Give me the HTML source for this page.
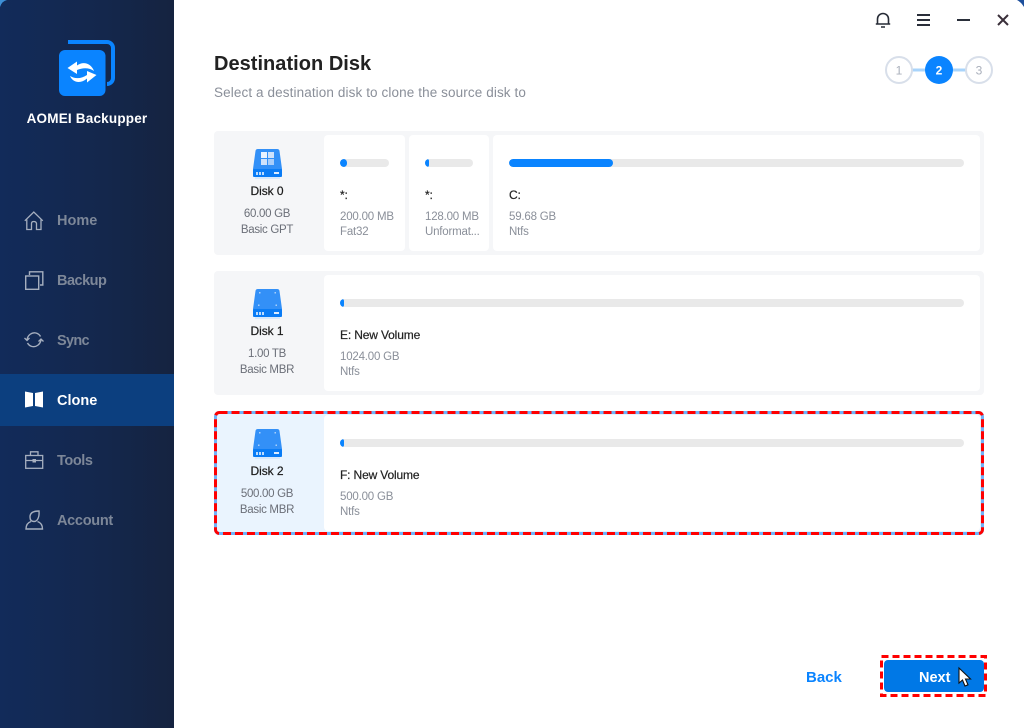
<!DOCTYPE html>
<html lang="en">
<head>
<meta charset="utf-8">
<title>AOMEI Backupper</title>
<style>
html,body{margin:0;padding:0;width:1024px;height:728px;overflow:hidden;background:#fff;font-family:"Liberation Sans",sans-serif}
#app{position:relative;width:1024px;height:728px;overflow:hidden;background:#fff}
.t{position:absolute;white-space:nowrap;line-height:16px}
.c{text-align:center}
.side{position:absolute;left:0;top:0;width:174px;height:728px;background:linear-gradient(90deg,#122b5a 0%,#14274c 60%,#152340 100%)}
.nav{position:absolute;left:57px;font-size:14.5px;font-weight:bold;color:#7d8798;line-height:18px}
.box{position:absolute;left:214px;width:770px;height:124px;background:#f5f6f8;border-radius:4px}
.w{position:absolute;background:#fff;border-radius:4px}
.bar{position:absolute;height:8px;background:#e9e9e9;border-radius:4px;overflow:hidden}
.bar i{position:absolute;left:0;top:0;height:8px;background:#0a84ff;border-radius:4px}
.dn{font-size:12px;color:#1b1b1b;-webkit-text-stroke:.2px #1b1b1b;letter-spacing:-.05px}
.ds{font-size:11.5px;color:#6b6f78;letter-spacing:-.3px}
.pn{font-size:12px;color:#222;-webkit-text-stroke:.2px #222;letter-spacing:-.15px}
.ps{font-size:11.5px;color:#8a8f99;letter-spacing:-.2px}
svg{position:absolute;overflow:visible}
</style>
</head>
<body>
<div id="app">
<div class="side"></div>

<!-- corners -->
<svg style="left:0;top:0" width="8" height="8"><path d="M0 0H7Q2 1 0 7Z" fill="#3d8fd6"/></svg>
<svg style="left:1014px;top:0" width="10" height="8"><path d="M3 0H10V7Q7 2 3 0Z" fill="#1c4f9c"/></svg>

<!-- logo -->
<svg style="left:59px;top:40px" width="57" height="57" viewBox="0 0 57 57">
<path d="M9 2H48a6 6 0 0 1 6 6V38a6 6 0 0 1-6 6" fill="none" stroke="#0a84ff" stroke-width="4"/>
<rect x="0" y="10" width="46.500" height="46" rx="6" fill="#0a84ff"/>
<path d="M8.500 28 18 21.500V25.500C24 21 32 23 35 31 30 27.500 24 27.500 18 30V34Z" fill="#fff"/>
<path d="M37.500 35 28 42.500V38.500C22 44 14 43 11 36 16 39 22 39 28 35V31Z" fill="#fff"/>
</svg>
<div class="t c" style="left:0;top:111px;width:174px;font-size:13.500px;font-weight:bold;color:#fff;letter-spacing:.2px">AOMEI Backupper</div>

<!-- nav -->
<div style="position:absolute;left:0;top:374px;width:174px;height:52px;background:#0c3f7f"></div>

<svg style="left:24px;top:211px" width="20" height="20" viewBox="0 0 20 20" fill="none" stroke="#a6afbf" stroke-width="1.300">
<path d="M.8 9.800 9.800 1l9 8.800"/><path d="M2.800 8.500V18.500H7.500V12.500Q7.500 10.500 9.800 10.500T12.500 12.500V18.500H17V8.500"/></svg>
<div class="nav" style="top:212px">Home</div>

<svg style="left:25px;top:271px" width="19" height="19" viewBox="0 0 19 19" fill="none" stroke="#a6afbf" stroke-width="1.400">
<rect x=".7" y="5" width="13" height="13.300"/><path d="M4.500 4V.8H17.800V14H15"/></svg>
<div class="nav" style="top:272px;letter-spacing:-.5px">Backup</div>

<svg style="left:24px;top:331px" width="20" height="18" viewBox="0 0 20 18" fill="none" stroke="#a6afbf" stroke-width="1.400">
<path d="M3 9C3.500 4 8 1 12 2c2 .5 3.500 1.700 4.500 3.500"/><path d="M17 8.500c-.5 5-5 8-9 7-2-.5-3.500-1.700-4.500-3.500"/>
<path d="M.5 7 3 9.500 5.500 7M14.500 10.500 17 8l2.500 2.500" stroke-width="1.300"/></svg>
<div class="nav" style="top:332px;letter-spacing:-.7px">Sync</div>

<svg style="left:25px;top:391px" width="18" height="17" viewBox="0 0 18 17" fill="#fff">
<path d="M0 .5 8 2V15L0 16.500Z"/><path d="M10 2 18 .5V16.500L10 15Z"/></svg>
<div class="nav" style="top:392px;color:#fff">Clone</div>

<svg style="left:25px;top:451px" width="19" height="18" viewBox="0 0 19 18" fill="none" stroke="#a6afbf" stroke-width="1.300">
<rect x=".7" y="4.500" width="17" height="12.800"/><path d="M5.500 4.500V.8H13V4.500M.7 9.500H7.500M11 9.500H17.700"/><rect x="7.500" y="8" width="3.500" height="3.500" fill="#a6afbf" stroke="none"/></svg>
<div class="nav" style="top:452px;letter-spacing:-.4px">Tools</div>

<svg style="left:25px;top:510px" width="19" height="20" viewBox="0 0 19 20" fill="none" stroke="#a6afbf" stroke-width="1.400">
<path d="M5 7C5 3 8 1 14 1 14.500 6 13 11.500 9 11.500 6.500 11.500 5 10 5 7Z"/><path d="M6 11.500C3 12.500 1 15 1 19H17.500C17.500 15 15.500 12.500 12.500 11.500"/></svg>
<div class="nav" style="top:512px;letter-spacing:-.3px">Account</div>

<!-- window controls -->
<svg style="left:875px;top:12px" width="16" height="16" viewBox="0 0 16 16" fill="none" stroke="#262b36" stroke-width="1.600">
<path d="M2.500 11.500V7a5.500 5.500 0 0 1 11 0v4.500M.8 12H15.200"/><path d="M6 15H10" stroke-width="1.500"/></svg>
<svg style="left:917px;top:14px" width="13" height="12" fill="#2a2f3a"><rect y="0" width="13" height="2"/><rect y="5" width="13" height="2"/><rect y="10" width="13" height="2"/></svg>
<svg style="left:957px;top:19px" width="13" height="2" fill="#2a2f3a"><rect width="13" height="2"/></svg>
<svg style="left:997px;top:14px" width="12" height="12" viewBox="0 0 12 12" stroke="#3a2f3a" stroke-width="2"><path d="M1 1 11 11M11 1 1 11"/></svg>

<!-- heading -->
<div class="t" style="left:214px;top:53px;font-size:20px;line-height:22px;font-weight:bold;color:#222;letter-spacing:.03px">Destination Disk</div>
<div class="t" style="left:214px;top:85px;font-size:13.500px;color:#8a8f99;letter-spacing:.11px">Select a destination disk to clone the source disk to</div>

<!-- steps -->
<svg style="left:885px;top:56px" width="110" height="28" viewBox="0 0 110 28">
<rect x="27" y="12.500" width="58" height="3" fill="#a9d4fb"/>
<circle cx="14" cy="14" r="13" fill="#fff" stroke="#d8dfea" stroke-width="2"/>
<circle cx="54" cy="14" r="14" fill="#0a84ff"/>
<circle cx="94" cy="14" r="13" fill="#fff" stroke="#d8dfea" stroke-width="2"/>
<text x="14" y="18.500" font-size="12" text-anchor="middle" fill="#a9afbb" font-family="Liberation Sans">1</text>
<text x="54" y="18.500" font-size="12" font-weight="bold" text-anchor="middle" fill="#fff" font-family="Liberation Sans">2</text>
<text x="94" y="18.500" font-size="12" text-anchor="middle" fill="#a9afbb" font-family="Liberation Sans">3</text>
</svg>

<!-- Disk 0 -->
<div class="box" style="top:131px"></div>
<div class="w" style="left:324px;top:135px;width:81px;height:116px"></div>
<div class="w" style="left:409px;top:135px;width:80px;height:116px"></div>
<div class="w" style="left:493px;top:135px;width:487px;height:116px"></div>
<svg style="left:253px;top:149px" width="29" height="30" viewBox="0 0 29 30">
<path d="M2.500 2Q2.700 0 5 0H24Q26.300 0 26.500 2L29 20V27H0V20Z" fill="#3390f7"/><rect x="0" y="20" width="29" height="8" rx="1" fill="#0a7cf5"/>
<rect x="2" y="28" width="25" height="2" fill="#d7e9fc"/>
<rect x="8" y="3" width="6" height="6" fill="#eaf3ff"/><rect x="15" y="3" width="6" height="6" fill="#cfe2fb"/><rect x="8" y="10" width="6" height="6" fill="#cfe2fb"/><rect x="15" y="10" width="6" height="6" fill="#a8cdfa"/>
<path d="M3 23h2v3H3zM6 23h2v3H6zM9 23h2v3H9z" fill="#bcdcff"/><rect x="21" y="23" width="5" height="2" fill="#dcecff"/></svg>
<div class="t c dn" style="left:214px;top:183px;width:106px">Disk 0</div>
<div class="t c ds" style="left:214px;top:206px;width:106px">60.00 GB</div>
<div class="t c ds" style="left:214px;top:222px;width:106px">Basic GPT</div>

<div class="bar" style="left:340px;top:159px;width:49px"><i style="width:7px"></i></div>
<div class="t pn" style="left:340px;top:187px">*:</div>
<div class="t ps" style="left:340px;top:209px">200.00 MB</div>
<div class="t ps" style="left:340px;top:224px">Fat32</div>

<div class="bar" style="left:425px;top:159px;width:48px"><i style="width:4px"></i></div>
<div class="t pn" style="left:425px;top:187px">*:</div>
<div class="t ps" style="left:425px;top:209px">128.00 MB</div>
<div class="t ps" style="left:425px;top:224px">Unformat...</div>

<div class="bar" style="left:509px;top:159px;width:455px"><i style="width:104px"></i></div>
<div class="t pn" style="left:509px;top:187px">C:</div>
<div class="t ps" style="left:509px;top:209px">59.68 GB</div>
<div class="t ps" style="left:509px;top:224px">Ntfs</div>

<!-- Disk 1 -->
<div class="box" style="top:271px"></div>
<div class="w" style="left:324px;top:275px;width:656px;height:116px"></div>
<svg style="left:253px;top:289px" width="29" height="30" viewBox="0 0 29 30">
<path d="M2.500 2Q2.700 0 5 0H24Q26.300 0 26.500 2L29 20V27H0V20Z" fill="#3390f7"/><rect x="0" y="20" width="29" height="8" rx="1" fill="#0a7cf5"/>
<rect x="2" y="28" width="25" height="2" fill="#d7e9fc"/>
<path d="M6 3h1.500v1.500H6zM21.500 3H23v1.500h-1.500zM5 15.500h1.500V17H5zM22.500 15.500H24V17h-1.500z" fill="#a8d0fb"/>
<path d="M3 23h2v3H3zM6 23h2v3H6zM9 23h2v3H9z" fill="#bcdcff"/><rect x="21" y="23" width="5" height="2" fill="#dcecff"/></svg>
<div class="t c dn" style="left:214px;top:323px;width:106px">Disk 1</div>
<div class="t c ds" style="left:214px;top:346px;width:106px">1.00 TB</div>
<div class="t c ds" style="left:214px;top:362px;width:106px">Basic MBR</div>
<div class="bar" style="left:340px;top:299px;width:624px"><i style="width:4px"></i></div>
<div class="t pn" style="left:340px;top:327px">E: New Volume</div>
<div class="t ps" style="left:340px;top:349px">1024.00 GB</div>
<div class="t ps" style="left:340px;top:364px">Ntfs</div>

<!-- Disk 2 -->
<div class="box" style="top:411px;background:#eaf4fe"></div>
<div class="w" style="left:324px;top:415px;width:656px;height:116px"></div>
<svg style="left:253px;top:429px" width="29" height="30" viewBox="0 0 29 30">
<path d="M2.500 2Q2.700 0 5 0H24Q26.300 0 26.500 2L29 20V27H0V20Z" fill="#3390f7"/><rect x="0" y="20" width="29" height="8" rx="1" fill="#0a7cf5"/>
<rect x="2" y="28" width="25" height="2" fill="#d7e9fc"/>
<path d="M6 3h1.500v1.500H6zM21.500 3H23v1.500h-1.500zM5 15.500h1.500V17H5zM22.500 15.500H24V17h-1.500z" fill="#a8d0fb"/>
<path d="M3 23h2v3H3zM6 23h2v3H6zM9 23h2v3H9z" fill="#bcdcff"/><rect x="21" y="23" width="5" height="2" fill="#dcecff"/></svg>
<div class="t c dn" style="left:214px;top:463px;width:106px">Disk 2</div>
<div class="t c ds" style="left:214px;top:486px;width:106px">500.00 GB</div>
<div class="t c ds" style="left:214px;top:502px;width:106px">Basic MBR</div>
<div class="bar" style="left:340px;top:439px;width:624px"><i style="width:4px"></i></div>
<div class="t pn" style="left:340px;top:467px">F: New Volume</div>
<div class="t ps" style="left:340px;top:489px">500.00 GB</div>
<div class="t ps" style="left:340px;top:504px">Ntfs</div>

<svg style="left:214px;top:411px" width="770" height="124" viewBox="0 0 770 124" fill="none">
<rect x="1.500" y="1.500" width="767" height="121" rx="4" stroke="#6db4fb" stroke-width="3"/>
<rect x="1.500" y="1.500" width="767" height="121" rx="4" stroke="#ff0000" stroke-width="3" stroke-dasharray="8 4"/>
</svg>

<!-- Buttons -->
<div class="t" style="left:806px;top:670px;font-size:15px;font-weight:bold;color:#0a84ff">Back</div>
<div style="position:absolute;left:884px;top:660px;width:100px;height:32px;background:#0078e6;border-radius:4px"></div>
<div class="t" style="left:919px;top:670px;font-size:14.500px;font-weight:bold;color:#fff">Next</div>
<svg style="left:880px;top:655px" width="107" height="42" viewBox="0 0 107 42" fill="none">
<rect x="1.500" y="1.500" width="104" height="39" stroke="#ff0000" stroke-width="3" stroke-dasharray="7 4"/>
</svg>
<svg style="left:958px;top:667px" width="14" height="20" viewBox="0 0 14 20">
<path d="M1 1V16L4.500 13 7 19 10 17.800 7.500 12H12.500Z" fill="#fff" stroke="#111" stroke-width="1.100"/></svg>
</div>
</body>
</html>
